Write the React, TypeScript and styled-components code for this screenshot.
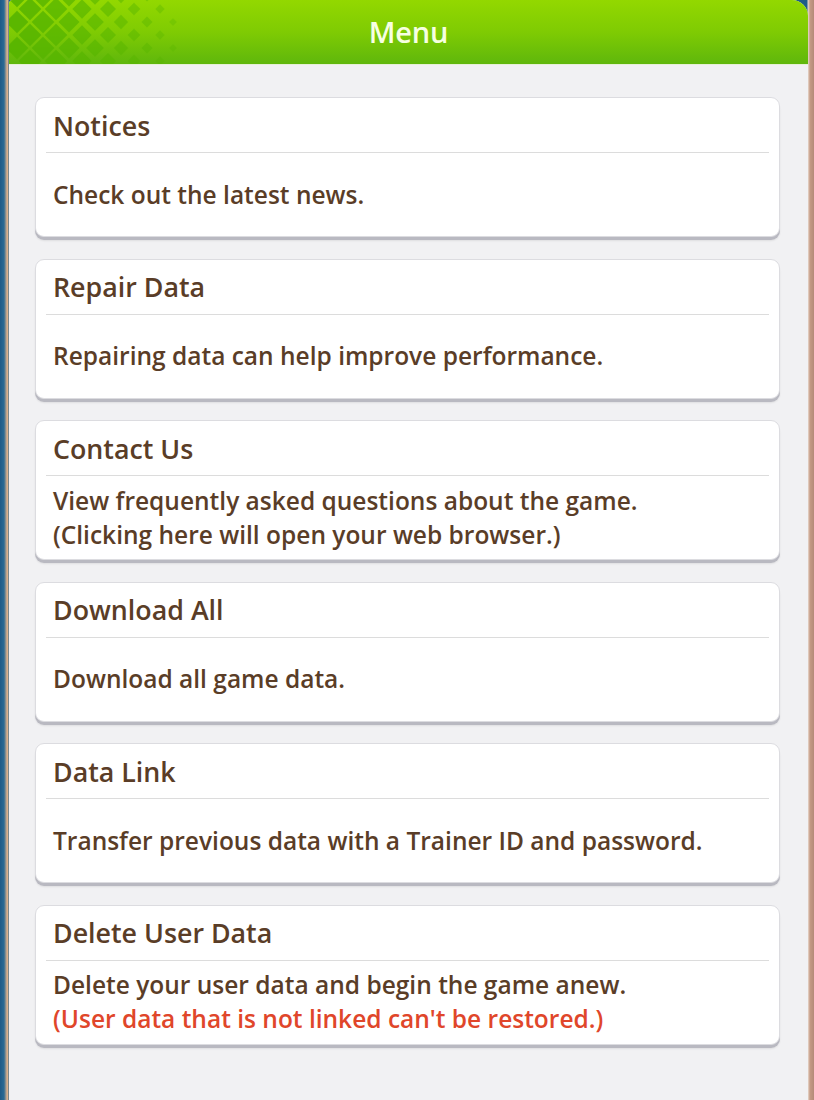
import React from "react";
import styled, { createGlobalStyle } from "styled-components";

const Global = createGlobalStyle`
  html, body {
    margin: 0;
    padding: 0;
    background: #1f5d86;
  }
  body {
    font-family: "Open Sans", "Noto Sans", sans-serif;
  }
`;

const Screen = styled.div`
  width: 814px;
  height: 1100px;
  display: flex;
  overflow: hidden;
  background: linear-gradient(90deg, #1d5a86 0px, #2a6a93 4px, #d9b08c 7px, #d9b08c 8px, transparent 9px),
    linear-gradient(270deg, #b48a78 0px, #c49a84 4px, #e8d8cc 6px, transparent 7px);
  background-color: #1f5d86;
`;

const Panel = styled.div`
  margin-left: 9px;
  width: 799px;
  display: flex;
  flex-direction: column;
  background: #f1f1f3;
  border-top-right-radius: 16px;
  border-top-left-radius: 4px;
  overflow: hidden;
`;

const Header = styled.div`
  position: relative;
  height: 64px;
  flex: none;
  display: flex;
  align-items: center;
  justify-content: center;
  background: linear-gradient(180deg, #93d800 0%, #7fcb03 50%, #5fb70c 100%);
  box-shadow: 0 1px 0 #e6f0d6;
`;

const Pattern = styled.svg`
  position: absolute;
  left: 0;
  top: 0;
`;

const Title = styled.h1`
  position: relative;
  margin: 0;
  font-family: "Open Sans", "Noto Sans", sans-serif;
  font-weight: 600;
  font-size: 29px;
  color: #f6ffe2;
  letter-spacing: -0.2px;
  transform: translateY(-1px);
`;

const List = styled.div`
  display: flex;
  flex-direction: column;
  gap: 21.6px;
  padding: 33px 28px 0 26px;
`;

const Card = styled.div`
  background: #ffffff;
  border: 1px solid #dcdce0;
  border-radius: 9px;
  box-shadow: 0 3px 0 #b9b9c1, 0 4px 2px rgba(0, 0, 0, 0.08);
  display: flex;
  flex-direction: column;
  height: 140px;
  box-sizing: border-box;
`;

const CardTitle = styled.div`
  height: 55px;
  flex: none;
  display: flex;
  align-items: center;
  margin: 0 10px;
  padding-left: 7px;
  border-bottom: 1px solid #dcdcdc;
  font-weight: 600;
  font-size: 26.8px;
  color: #5a3d27;
  box-sizing: border-box;
`;

const CardBody = styled.div`
  flex: 1;
  display: flex;
  flex-direction: column;
  justify-content: center;
  padding: 0 17px 0;
  font-weight: 600;
  font-size: 24.5px;
  line-height: 34px;
  color: #5a3d27;
`;

const Warn = styled.span`
  color: #e0462a;
`;

type Item = { title: string; lines: string[]; warn?: string };

const items: Item[] = [
  { title: "Notices", lines: ["Check out the latest news."] },
  { title: "Repair Data", lines: ["Repairing data can help improve performance."] },
  {
    title: "Contact Us",
    lines: ["View frequently asked questions about the game.", "(Clicking here will open your web browser.)"],
  },
  { title: "Download All", lines: ["Download all game data."] },
  { title: "Data Link", lines: ["Transfer previous data with a Trainer ID and password."] },
  {
    title: "Delete User Data",
    lines: ["Delete your user data and begin the game anew."],
    warn: "(User data that is not linked can't be restored.)",
  },
];

// Diamond lattice in the header's left corner, shrinking as it runs right
function DiamondPattern() {
  const cells: React.ReactNode[] = [];
  const step = 26;
  for (let row = 0; row < 6; row++) {
    for (let col = 0; col < 9; col++) {
      const cx = 8 + col * step + (row % 2 ? step / 2 : 0);
      const cy = -4 + row * (step / 2);
      const fade = Math.max(0, 1 - (cx - 20) / 160);
      if (fade <= 0.05) continue;
      const size = Math.min(16, 16 * (0.25 + 0.9 * fade));
      cells.push(
        <rect
          key={`${row}-${col}`}
          x={cx - size / 2}
          y={cy - size / 2}
          width={size}
          height={size}
          transform={`rotate(45 ${cx} ${cy})`}
          fill="#56b400"
          opacity={0.25 + 0.6 * fade}
        />
      );
    }
  }
  return (
    <Pattern width="210" height="64" viewBox="0 0 210 64">
      {cells}
    </Pattern>
  );
}

export default function App() {
  return (
    <>
      <Global />
      <Screen>
        <Panel>
          <Header>
            <DiamondPattern />
            <Title>Menu</Title>
          </Header>
          <List>
            {items.map((it) => (
              <Card key={it.title}>
                <CardTitle>{it.title}</CardTitle>
                <CardBody>
                  {it.lines.map((l) => (
                    <div key={l}>{l}</div>
                  ))}
                  {it.warn && <Warn>{it.warn}</Warn>}
                </CardBody>
              </Card>
            ))}
          </List>
        </Panel>
      </Screen>
    </>
  );
}
